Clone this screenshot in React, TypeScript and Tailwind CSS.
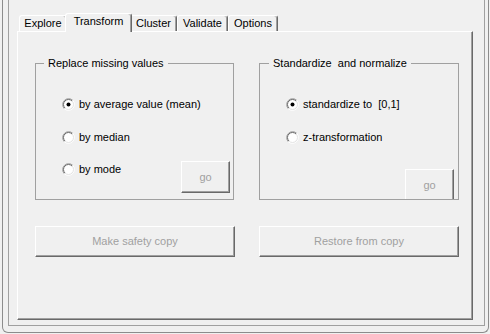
import React from 'react';

const tabs = [
    { label: 'Explore', width: 'w-[48px]' },
    { label: 'Transform', width: 'w-[67px]', selected: true },
    { label: 'Cluster', width: 'w-[47px]' },
    { label: 'Validate', width: 'w-[51px]' },
    { label: 'Options', width: 'w-[50px]' },
];

const Radio: React.FC<{ label: string; checked?: boolean }> = ({ label, checked }) => (
    <div className="flex items-center gap-[4px] h-[13px] leading-[13px]">
        <svg width="13" height="13" viewBox="0 0 13 13" className="shrink-0">
            <circle cx="6.5" cy="6.5" r="5.5" fill="#fff" />
            <path d="M2.26 10.74 A6 6 0 0 1 10.74 2.26" fill="none" stroke="#a0a0a0" strokeWidth="1" />
            <path d="M10.74 2.26 A6 6 0 0 1 2.26 10.74" fill="none" stroke="#fff" strokeWidth="1" />
            <path d="M2.96 10.04 A5 5 0 0 1 10.04 2.96" fill="none" stroke="#696969" strokeWidth="1" />
            <path d="M10.04 2.96 A5 5 0 0 1 2.96 10.04" fill="none" stroke="#e3e3e3" strokeWidth="1" />
            {checked && <circle cx="6.5" cy="6.5" r="2" fill="#000" />}
        </svg>
        <span className="whitespace-pre">{label}</span>
    </div>
);

const raised =
    'bg-[#f0f0f0] border border-t-white border-l-white border-r-[#696969] border-b-[#696969] shadow-[inset_-1px_-1px_0_#a0a0a0] text-[#a0a0a0] flex items-center justify-center shrink-0';

const GoButton: React.FC<{ className?: string }> = ({ className }) => (
    <div className={`${raised} w-[49px] h-[32px] ${className ?? ''}`}>go</div>
);

const App: React.FC = () => {
    return (
        <div className="w-[490px] h-[334px] bg-[#f0f0f0] pl-[2px] font-['Liberation_Sans',Arial,sans-serif] text-[11px] text-black overflow-hidden">
            {/* outer window frame */}
            <div className="w-[487px] h-[333px] border-l border-r border-b border-[#8c8c8c] rounded-b-[6px] pl-[5px] pr-[3px] pb-[6px]">
                {/* inner frame */}
                <div className="h-[326px] border-l border-r border-b border-[#a0a0a0] pl-[8px] pt-[13px]">
                    {/* tab strip */}
                    <div className="flex items-end h-[18px] pl-[2px]">
                        {tabs.map((t) =>
                            t.selected ? (
                                <div
                                    key={t.label}
                                    className={`${t.width} h-[19px] -mx-[2px] -mb-[1px] relative z-10 bg-[#f0f0f0] border-t border-l border-white border-r border-r-[#696969] rounded-t-[3px] shadow-[inset_-1px_0_0_#a0a0a0] flex items-center justify-center pb-[3px]`}
                                >
                                    {t.label}
                                </div>
                            ) : (
                                <div
                                    key={t.label}
                                    className={`${t.width} h-[16px] border-t border-l border-white border-r border-r-[#696969] rounded-t-[3px] shadow-[inset_-1px_0_0_#a0a0a0] flex items-center justify-center`}
                                >
                                    {t.label}
                                </div>
                            )
                        )}
                    </div>

                    {/* tab page */}
                    <div className="w-[456px] h-[289px] border border-t-white border-l-white border-r-[#696969] border-b-[#696969] shadow-[inset_-1px_-1px_0_#a0a0a0] pl-[17px] pt-[25px]">
                        <div className="flex gap-[25px]">
                            <fieldset className="w-[199px] h-[143px] border border-[#a0a0a0] overflow-hidden">
                                <legend className="ml-[8px] px-[4px] leading-[12px]">Replace missing values</legend>
                                <div className="flex flex-col pl-[26px] pt-[29px]">
                                    <Radio checked label="by average value (mean)" />
                                    <div className="mt-[20px]">
                                        <Radio label="by median" />
                                    </div>
                                    <div className="mt-[17px] flex items-start justify-between pr-[3px]">
                                        <div className="mt-[2px]">
                                            <Radio label="by mode" />
                                        </div>
                                        <GoButton />
                                    </div>
                                </div>
                            </fieldset>

                            <fieldset className="w-[200px] h-[143px] border border-[#a0a0a0] overflow-hidden">
                                <legend className="ml-[9px] px-[4px] leading-[12px] whitespace-pre">Standardize  and normalize</legend>
                                <div className="flex flex-col pl-[26px] pt-[29px]">
                                    <Radio checked label="standardize to  [0,1]" />
                                    <div className="mt-[20px]">
                                        <Radio label="z-transformation" />
                                    </div>
                                    <GoButton className="mt-[25px] self-end mr-[4px]" />
                                </div>
                            </fieldset>
                        </div>

                        <div className="flex gap-[24px] mt-[26px]">
                            <div className={`${raised} w-[200px] h-[31px]`}>Make safety copy</div>
                            <div className={`${raised} w-[200px] h-[31px]`}>Restore from copy</div>
                        </div>
                    </div>
                </div>
            </div>
        </div>
    );
};

export default App;
